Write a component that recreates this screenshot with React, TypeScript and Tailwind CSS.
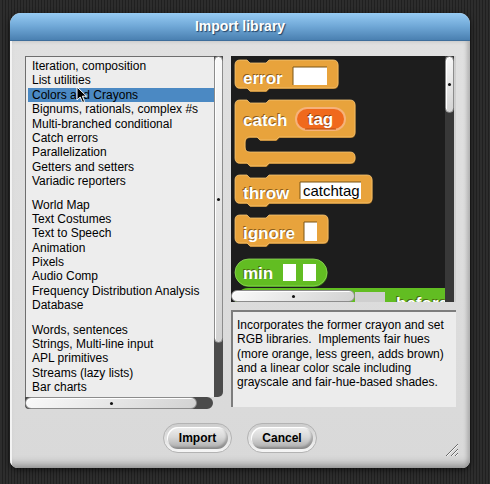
import React from 'react';

const font = 'Liberation Sans, Arial, Helvetica, sans-serif';

const orange = '#e8a33c';
const orangeDark = '#a8701f';
const orangeEdge = '#f3c375';
const green = '#62bd22';
const greenDark = '#3f8a12';

// command block with the puzzle notch on top and the bump below
const cmdPath = (x: number, y: number, w: number, h: number) => {
  const r = 5;
  const n = x + 12;
  const d = 3;
  return `M${x},${y + r} Q${x},${y} ${x + r},${y} L${n},${y} L${n + d},${y + d} L${n + d + 16},${y + d} L${n + 2 * d + 16},${y} L${x + w - r},${y} Q${x + w},${y} ${x + w},${y + r} L${x + w},${y + h - r} Q${x + w},${y + h} ${x + w - r},${y + h} L${n + 2 * d + 16},${y + h} L${n + d + 16},${y + h + d} L${n + d},${y + h + d} L${n},${y + h} L${x + r},${y + h} Q${x},${y + h} ${x},${y + h - r} Z`;
};

// C-shaped block (catch)
const cPath = (x: number, y: number, w: number, h1: number, s: number, hb: number) => {
  const r = 5;
  const n = x + 12;
  const d = 3;
  const arm = 10;
  const ni = x + arm + 12;
  const H = h1 + s + hb;
  return [
    `M${x},${y + r} Q${x},${y} ${x + r},${y}`,
    `L${n},${y} L${n + d},${y + d} L${n + d + 16},${y + d} L${n + 2 * d + 16},${y}`,
    `L${x + w - r},${y} Q${x + w},${y} ${x + w},${y + r}`,
    `L${x + w},${y + h1 - r} Q${x + w},${y + h1} ${x + w - r},${y + h1}`,
    `L${ni + 2 * d + 16},${y + h1} L${ni + d + 16},${y + h1 + d} L${ni + d},${y + h1 + d} L${ni},${y + h1}`,
    `L${x + arm + r},${y + h1} Q${x + arm},${y + h1} ${x + arm},${y + h1 + r}`,
    `L${x + arm},${y + h1 + s - r} Q${x + arm},${y + h1 + s} ${x + arm + r},${y + h1 + s}`,
    `L${x + w - r},${y + h1 + s} Q${x + w},${y + h1 + s} ${x + w},${y + h1 + s + r}`,
    `L${x + w},${y + H - r} Q${x + w},${y + H} ${x + w - r},${y + H}`,
    `L${n + 2 * d + 16},${y + H} L${n + d + 16},${y + H + d} L${n + d},${y + H + d} L${n},${y + H}`,
    `L${x + r},${y + H} Q${x},${y + H} ${x},${y + H - r} Z`,
  ].join(' ');
};

const Label: React.FC<{ x: number; y: number; text: string; size?: number; anchor?: 'start' | 'middle' }> = ({ x, y, text, size = 17, anchor = 'start' }) => (
  <>
    <text x={x - 1} y={y - 1} fill="rgba(60,35,0,0.55)" fontFamily={font} fontWeight="bold" fontSize={size} textAnchor={anchor}>
      {text}
    </text>
    <text x={x} y={y} fill="#ffffff" fontFamily={font} fontWeight="bold" fontSize={size} textAnchor={anchor}>
      {text}
    </text>
  </>
);

const Slot: React.FC<{ x: number; y: number; w: number; h: number }> = ({ x, y, w, h }) => (
  <>
    <rect x={x} y={y} width={w} height={h} fill="#ffffff" />
    <path d={`M${x},${y + h} L${x},${y} L${x + w},${y}`} fill="none" stroke="#7b5416" strokeWidth={1} />
  </>
);

const Block: React.FC<{ d: string; fill: string; dark: string; edge: string }> = ({ d, fill, dark, edge }) => (
  <>
    <path d={d} fill={dark} transform="translate(0.5,1)" />
    <path d={d} fill={fill} stroke={edge} strokeWidth={0.8} />
  </>
);

const Palette: React.FC = () => (
  <svg width={214} height={246} className="block">
    {/* error */}
    <Block d={cmdPath(4, 4, 103, 28)} fill={orange} dark={orangeDark} edge={orangeEdge} />
    <Label x={12} y={28} text="error" />
    <Slot x={62} y={11} w={34} h={18} />

    {/* catch */}
    <Block d={cPath(4, 44, 120, 37, 15, 11)} fill={orange} dark={orangeDark} edge={orangeEdge} />
    <Label x={12} y={70} text="catch" />
    <rect x={64} y={51} width={51} height={24} rx={12} fill="#f6b27a" />
    <rect x={66} y={53} width={47} height={20} rx={10} fill="#f0691d" />
    <path d="M74,73 L105,73" stroke="#b84a0e" strokeWidth={1} />
    <Label x={89.5} y={69} text="tag" anchor="middle" />

    {/* throw */}
    <Block d={cmdPath(4, 119, 137, 28)} fill={orange} dark={orangeDark} edge={orangeEdge} />
    <Label x={12} y={143} text="throw" />
    <Slot x={69} y={126} w={61} h={17} />
    <text x={72} y={140} fill="#000" fontFamily={font} fontSize={15}>
      catchtag
    </text>

    {/* ignore */}
    <Block d={cmdPath(4, 159, 93, 28)} fill={orange} dark={orangeDark} edge={orangeEdge} />
    <Label x={12} y={183} text="ignore" />
    <Slot x={73} y={166} w={13} h={19} />

    {/* min */}
    <rect x={4.5} y={204} width={92} height={27} rx={13.5} fill={greenDark} />
    <rect x={4} y={203} width={92} height={27} rx={13.5} fill={green} stroke="#8fd85a" strokeWidth={0.8} />
    <Label x={12} y={223} text="min" />
    <rect x={52} y={208} width={13} height={17} fill="#fff" />
    <rect x={72} y={208} width={13} height={17} fill="#fff" />

    {/* partly hidden reporter */}
    <rect x={4} y={232} width={240} height={26} rx={13} fill={green} />
    <rect x={124} y={236} width={30} height={16} fill="#cfcfcf" />
    <Label x={165} y={253} text="before" />
  </svg>
);

const Dot: React.FC = () => <span className="w-[3px] h-[3px] rounded-full bg-[#111]" />;

const Thumb: React.FC<{ className: string }> = ({ className }) => (
  <div
    className={`flex items-center justify-center border border-[#8c8c8c] bg-[linear-gradient(135deg,#fafafa,#d2d2d2)] shadow-[inset_1px_1px_0_#ffffff] ${className}`}
  >
    <Dot />
  </div>
);

const group1 = [
  'Iteration, composition',
  'List utilities',
  'Colors and Crayons',
  'Bignums, rationals, complex #s',
  'Multi-branched conditional',
  'Catch errors',
  'Parallelization',
  'Getters and setters',
  'Variadic reporters',
];

const group2 = [
  'World Map',
  'Text Costumes',
  'Text to Speech',
  'Animation',
  'Pixels',
  'Audio Comp',
  'Frequency Distribution Analysis',
  'Database',
];

const group3 = [
  'Words, sentences',
  'Strings, Multi-line input',
  'APL primitives',
  'Streams (lazy lists)',
  'Bar charts',
];

const Row: React.FC<{ name: string; selected?: boolean }> = ({ name, selected }) => (
  <div className={`h-[14.4px] ml-[2px] pl-[4px] whitespace-nowrap ${selected ? 'bg-[#4b89c3]' : ''}`}>{name}</div>
);

const description = [
  'Incorporates the former crayon and set',
  'RGB libraries.  Implements fair hues',
  '(more orange, less green, adds brown)',
  'and a linear color scale including',
  'grayscale and fair-hue-based shades.',
];

const DialogButton: React.FC<{ label: string; width: string }> = ({ label, width }) => (
  <div
    className={`${width} h-[30px] p-[3px] rounded-[15px] border border-[#b3b3b3] bg-[linear-gradient(180deg,#cdcdcd,#f6f6f6)]`}
  >
    <div className="h-full rounded-[12px] flex items-center justify-center text-[12px] font-bold text-black bg-[linear-gradient(180deg,#efefef_0%,#d9d9d9_45%,#a9a9a9_100%)] shadow-[inset_-2px_-2px_2px_rgba(0,0,0,0.2),inset_1px_1px_0_#ffffff]">
      {label}
    </div>
  </div>
);

const App: React.FC = () => {
  return (
    <div className="relative w-[490px] h-[484px] overflow-hidden pt-[13px] pl-[10px] font-['Liberation_Sans',Arial,sans-serif] bg-[repeating-linear-gradient(90deg,#2d2d2d_0px,#2d2d2d_2px,#202020_2px,#202020_3px)]">
      <div className="relative w-[460px] h-[455px] flex flex-col rounded-t-[11px] rounded-b-[8px] overflow-hidden bg-[#dcdcdc] shadow-[0_2px_6px_rgba(0,0,0,0.6)]">
        {/* Title bar */}
        <div className="h-[28px] shrink-0 flex items-center justify-center border-b border-[#3e6e9b] bg-[linear-gradient(180deg,#96cbf3_0%,#6fa7d6_50%,#4a80b1_100%)] text-white text-[14px] font-bold [text-shadow:1px_1px_1px_rgba(20,45,75,0.8)]">
          Import library
        </div>

        {/* Body */}
        <div className="flex-1 flex flex-col px-[15px] pt-[15px] bg-[linear-gradient(180deg,#e0e0e0,#d9d9d9)] shadow-[inset_2px_0_0_#f3f3f3,inset_-3px_0_4px_rgba(0,0,0,0.18),inset_0_-8px_7px_-3px_rgba(0,0,0,0.25)]">
          <div className="flex gap-[8px] h-[353px]">
            {/* Library list */}
            <div className="w-[198px] flex flex-col">
              <div className="flex h-[341px]">
                <div className="w-[189px] overflow-hidden bg-[#ededed] border-t border-l border-[#6e6e6e] pt-[2px] text-[12px] leading-[14.4px] text-black">
                  {group1.map((n) => (
                    <Row key={n} name={n} selected={n === 'Colors and Crayons'} />
                  ))}
                  <div className="mt-[9px]">
                    {group2.map((n) => (
                      <Row key={n} name={n} />
                    ))}
                  </div>
                  <div className="mt-[10px]">
                    {group3.map((n) => (
                      <Row key={n} name={n} />
                    ))}
                  </div>
                </div>
                <div className="w-[9px] flex flex-col bg-[#4b4b4b] rounded-br-[5px]">
                  <Thumb className="h-[287px] rounded-[5px]" />
                </div>
              </div>
              <div className="w-[188px] h-[12px] flex bg-[#4b4b4b] rounded-r-[6px] rounded-bl-[4px]">
                <Thumb className="w-[172px] h-full rounded-[6px]" />
              </div>
            </div>

            {/* Preview and description */}
            <div className="w-[225px] flex flex-col gap-[8px]">
              <div className="h-[246px] flex bg-[#1d1d1d]">
                <div className="relative w-[214px] overflow-hidden">
                  <Palette />
                  <Thumb className="absolute left-0 bottom-0 w-[124px] h-[12px] rounded-[6px]" />
                </div>
                <div className="w-[11px] flex flex-col bg-[#383838] border-r-2 border-[#cfcfcf]">
                  <Thumb className="h-[57px] rounded-[5px]" />
                </div>
              </div>
              <div className="h-[97px] bg-[#ececec] border-t-2 border-l-2 border-[#7d7d7d] pl-[4px] pt-[6px] text-[12px] leading-[14.3px] text-black">
                {description.map((l) => (
                  <div key={l} className="whitespace-pre">
                    {l}
                  </div>
                ))}
              </div>
            </div>
          </div>

          {/* Buttons */}
          <div className="flex justify-center gap-[15px] mt-[14px]">
            <DialogButton label="Import" width="w-[69px]" />
            <DialogButton label="Cancel" width="w-[70px]" />
          </div>
        </div>

        {/* Resize handle */}
        <svg width={15} height={15} className="absolute right-[11px] bottom-[11px]">
          <path d="M2,14 L14,2 M7,14 L14,7 M11,14 L14,11" stroke="#6a6a6a" strokeWidth={1} />
          <path d="M3,14 L14,3 M8,14 L14,8 M12,14 L14,12" stroke="#f5f5f5" strokeWidth={1} />
        </svg>
      </div>

      {/* Mouse pointer */}
      <svg width={12} height={18} className="absolute left-[76px] top-[86px]">
        <path d="M1,1 L1,14 L4.2,11 L6.6,16.5 L8.6,15.6 L6.3,10.2 L10.5,10.2 Z" fill="#000" stroke="#fff" strokeWidth={1} />
      </svg>
    </div>
  );
};

export default App;
